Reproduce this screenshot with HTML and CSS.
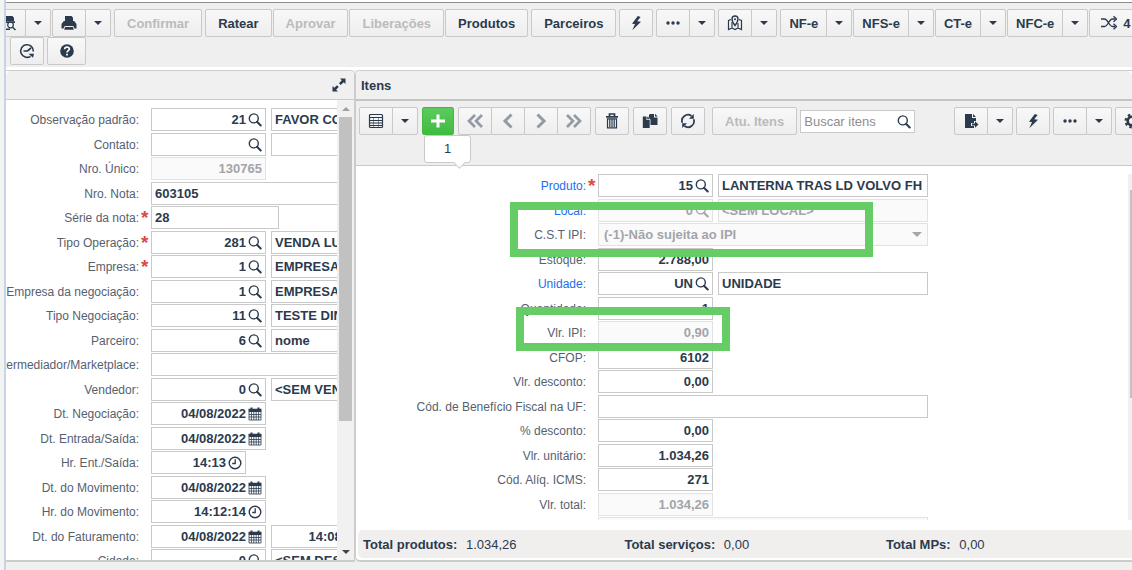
FILE: index.html
```html
<!DOCTYPE html>
<html lang="pt-BR">
<head>
    <meta charset="UTF-8">
    <meta name="viewport" content="width=device-width, initial-scale=1.0">
    <title>Central de Vendas</title>
    <link rel="stylesheet" href="styles.css">
</head>
<body>

    <!-- Icons -->
    <svg class="sprite" aria-hidden="true">
        <symbol id="search" viewBox="0 0 14 14"><circle cx="5.8" cy="5.4" r="4.5" fill="none" stroke="currentColor" stroke-width="1.4"/><path d="M9 8.8l3.7 3.7" stroke="currentColor" stroke-width="2" stroke-linecap="round"/></symbol>
        <symbol id="calendar" viewBox="0 0 14 14"><path d="M.5 1.8h2V.5h2v1.300h5V.5h2v1.300h2V5H.5z" fill="currentColor"/><path d="M1 5v8h12V5M1 7.500h12M1 10h12M3.400 5v8M5.800 5v8M8.200 5v8M10.600 5v8" fill="none" stroke="currentColor" stroke-width=".8"/></symbol>
        <symbol id="clock" viewBox="0 0 14 14"><circle cx="7" cy="7" r="5.8" fill="none" stroke="currentColor" stroke-width="1.4"/><path d="M7.2 3.2v4.3H4.2" fill="none" stroke="currentColor" stroke-width="1.3"/></symbol>
        <symbol id="caret" viewBox="0 0 8 4"><path d="M0 0h8L4 4z" fill="currentColor"/></symbol>
        <symbol id="bolt" viewBox="0 0 16 16"><path d="M9.8 1L4 8.7l3 .3-2.7 6.2L13 6.7 9.2 6.2 12.6 2z" fill="currentColor"/></symbol>
        <symbol id="dots" viewBox="0 0 16 16"><circle cx="3" cy="8" r="1.7" fill="currentColor"/><circle cx="8" cy="8" r="1.7" fill="currentColor"/><circle cx="13" cy="8" r="1.7" fill="currentColor"/></symbol>
        <symbol id="print" viewBox="0 0 16 16"><path d="M4 1h6.500L12 2.500V7H4z" fill="currentColor"/><path d="M2.800 6h10.400L15.500 9v4.500h-2L12.300 11H3.700L2.500 13.500h-2V9z" fill="currentColor"/><path d="M4 12h8l.8 2.800H3.200z" fill="currentColor"/></symbol>
        <symbol id="preview" viewBox="0 0 16 16"><path d="M3 1h8.500L13 3v3H3z" fill="currentColor"/><path d="M1 6.200h13V8H1zM1 8h3v5H1z" fill="currentColor"/><circle cx="9.500" cy="10" r="2.800" fill="#f4f4f4" stroke="currentColor" stroke-width="1.200"/><path d="M11.500 12.200l3 2.800M3 14.300h6" stroke="currentColor" stroke-width="1.500"/></symbol>
        <symbol id="map" viewBox="0 0 16 16"><path d="M4 4.500L1.500 5.500v9L5 13l3 1.500L11 13l3.500 1.500v-9L12 4.500M5 7v6M11 8v5" fill="none" stroke="currentColor" stroke-width="1.200"/><path d="M8 1a3 3 0 0 0-3 3c0 2.500 3 6.500 3 6.500S11 6.500 11 4a3 3 0 0 0-3-3z" fill="none" stroke="currentColor" stroke-width="1.400"/><circle cx="8" cy="4.200" r="1" fill="currentColor"/></symbol>
        <symbol id="shuffle" viewBox="0 0 16 16"><path d="M0 4h3.500c3.500 0 4.500 7.500 8 7.500H14M0 11.500h3.500c3.500 0 4.500-7.500 8-7.500H14" fill="none" stroke="currentColor" stroke-width="1.300"/><path d="M12.500 1.200L15.500 4l-3 2.800M12.500 8.700l3 2.800-3 2.800" fill="none" stroke="currentColor" stroke-width="1.300"/></symbol>
        <symbol id="history" viewBox="0 0 16 16"><path d="M11.500 13.300A6.300 6.300 0 1 1 14.300 8.500" fill="none" stroke="currentColor" stroke-width="1.600"/><path d="M4.500 8h4l3.500-3" fill="none" stroke="currentColor" stroke-width="1.700"/><path d="M9.500 10.800h5.500l-1 4z" fill="currentColor"/></symbol>
        <symbol id="help" viewBox="0 0 16 16"><circle cx="8" cy="8" r="6.800" fill="currentColor"/><path d="M5.700 6.300c0-3 4.600-3 4.600-.3C10.300 7.600 8 7.600 8 9.500" fill="none" stroke="#fff" stroke-width="1.700"/><path d="M7.100 10.700h1.800v1.800H7.100z" fill="#fff"/></symbol>
        <symbol id="expand" viewBox="0 0 14 14"><path d="M8 .5h5.500V6l-1.800-1.800-3 2.800L7 5.300l2.800-3zM.5 8l1.800 1.800L5 7.200 6.700 9l-2.600 2.700L6 13.500H.5z" fill="currentColor"/></symbol>
        <symbol id="table" viewBox="0 0 16 16"><rect x="1.500" y="1.500" width="13" height="13" rx="1" fill="none" stroke="currentColor" stroke-width="1.200"/><path d="M2 4.500h12M2 7.500h12M2 10h12M2 12.500h12" stroke="currentColor" stroke-width="1.200"/><path d="M5.500 4v10M10.500 4v10" stroke="currentColor" stroke-width=".5"/></symbol>
        <symbol id="plus" viewBox="0 0 16 16"><path d="M8 1.500v13M1 8h14" stroke="currentColor" stroke-width="3"/></symbol>
        <symbol id="prev" viewBox="0 0 16 16"><path d="M11.500 1.500L5 8l6.500 6.500" fill="none" stroke="currentColor" stroke-width="3"/></symbol>
        <symbol id="next" viewBox="0 0 16 16"><path d="M4.500 1.500L11 8l-6.500 6.500" fill="none" stroke="currentColor" stroke-width="3"/></symbol>
        <symbol id="first" viewBox="0 0 16 16"><path d="M8 2L2 8l6 6M15 2L9 8l6 6" fill="none" stroke="currentColor" stroke-width="2.700"/></symbol>
        <symbol id="last" viewBox="0 0 16 16"><path d="M1 2l6 6-6 6M8 2l6 6-6 6" fill="none" stroke="currentColor" stroke-width="2.700"/></symbol>
        <symbol id="trash" viewBox="0 0 16 16"><path d="M5.500 3V1h5v2M2 3.800h12" fill="none" stroke="currentColor" stroke-width="1.700"/><path d="M3.500 5.500v9.300h9V5.500M5.800 5.500V14M8 5.500V14M10.200 5.500V14M3 5.800h10" fill="none" stroke="currentColor" stroke-width="1.200"/></symbol>
        <symbol id="copy" viewBox="0 0 16 16"><path d="M7.500 1H12v3.500h3.500V12H8.500V6.500L6.500 4.500zM13 .8l2.700 2.700H13z" fill="currentColor"/><path d="M.8 3.500h3.700V7h3.200v8H.8zM5.200 3.500l2.600 2.700H5.200z" fill="currentColor"/></symbol>
        <symbol id="refresh" viewBox="0 0 16 16"><path d="M2.300 9.800A6 6 0 0 1 11.500 3M13.700 6.200A6 6 0 0 1 4.500 13" fill="none" stroke="currentColor" stroke-width="1.700"/><path d="M13.800 1v4.800H9zM2.200 15v-4.800H7z" fill="currentColor"/></symbol>
        <symbol id="export" viewBox="0 0 16 16"><path d="M2 1h7v4h4v3h-2v2H8v3h3v2H2zM10 1l3 3h-3z" fill="currentColor"/><path d="M9 10.500h3V8.300l3.500 3.200-3.500 3.200v-2.200H9z" fill="currentColor"/></symbol>
        <symbol id="gear" viewBox="0 0 16 16"><circle cx="8" cy="8" r="4.300" fill="none" stroke="currentColor" stroke-width="2.600"/><circle cx="8" cy="8" r="6.300" fill="none" stroke="currentColor" stroke-width="2.400" stroke-dasharray="2.470 2.470"/></symbol>
    </svg>

    <div class="app">

        <header class="toolbar">
            <div class="toolbar-row first-row">
                <div class="tight">
                    <div class="group">
                        <button class="btn icon" aria-label="Visualizar"><svg><use href="#preview"/></svg></button>
                        <button class="btn drop" aria-label="Opções de visualização"><svg><use href="#caret"/></svg></button>
                    </div>
                    <div class="group">
                        <button class="btn icon" aria-label="Imprimir"><svg><use href="#print"/></svg></button>
                        <button class="btn drop" aria-label="Opções de impressão"><svg><use href="#caret"/></svg></button>
                    </div>
                </div>
                <button class="btn" disabled>Confirmar</button>
                <div class="tight">
                    <button class="btn">Ratear</button>
                    <button class="btn" disabled>Aprovar</button>
                    <button class="btn" disabled>Liberações</button>
                    <button class="btn">Produtos</button>
                </div>
                <button class="btn">Parceiros</button>
                <button class="btn icon" aria-label="Ações"><svg><use href="#bolt"/></svg></button>
                <div class="group">
                    <button class="btn icon" aria-label="Mais"><svg><use href="#dots"/></svg></button>
                    <button class="btn drop" aria-label="Mais opções"><svg><use href="#caret"/></svg></button>
                </div>
                <div class="group">
                    <button class="btn icon" aria-label="Mapa"><svg><use href="#map"/></svg></button>
                    <button class="btn drop" aria-label="Opções do mapa"><svg><use href="#caret"/></svg></button>
                </div>
                <div class="tight">
                    <div class="group">
                        <button class="btn nf">NF-e</button>
                        <button class="btn drop" aria-label="Opções NF-e"><svg><use href="#caret"/></svg></button>
                    </div>
                    <div class="group">
                        <button class="btn nf">NFS-e</button>
                        <button class="btn drop" aria-label="Opções NFS-e"><svg><use href="#caret"/></svg></button>
                    </div>
                    <div class="group">
                        <button class="btn nf">CT-e</button>
                        <button class="btn drop" aria-label="Opções CT-e"><svg><use href="#caret"/></svg></button>
                    </div>
                    <div class="group">
                        <button class="btn nf">NFC-e</button>
                        <button class="btn drop" aria-label="Opções NFC-e"><svg><use href="#caret"/></svg></button>
                    </div>
                    <button class="btn count"><svg><use href="#shuffle"/></svg>4</button>
                </div>
            </div>
            <div class="toolbar-row second-row">
                <button class="btn icon" aria-label="Histórico"><svg><use href="#history"/></svg></button>
                <button class="btn help" aria-label="Ajuda"><svg><use href="#help"/></svg></button>
            </div>
        </header>

        <main class="panels">

            <!-- Note header -->
            <section class="panel note">
                <div class="panel-title">
                    <button class="expand" aria-label="Expandir"><svg><use href="#expand"/></svg></button>
                </div>
                <div class="note-body">
                    <form class="form note-form">
                        <div class="row">
                            <label for="obs">Observação padrão:</label>
                            <div class="field num"><input id="obs" value="21"><svg><use href="#search"/></svg></div>
                            <div class="field desc"><input aria-label="Descrição da observação" value="FAVOR CO"></div>
                        </div>
                        <div class="row">
                            <label for="contato">Contato:</label>
                            <div class="field num"><input id="contato"><svg><use href="#search"/></svg></div>
                            <div class="field desc"><input aria-label="Nome do contato"></div>
                        </div>
                        <div class="row">
                            <label for="unico">Nro. Único:</label>
                            <div class="field num off"><input id="unico" value="130765" disabled></div>
                        </div>
                        <div class="row">
                            <label for="nota">Nro. Nota:</label>
                            <div class="field wide"><input id="nota" value="603105"></div>
                        </div>
                        <div class="row">
                            <label for="serie" class="required">Série da nota:</label>
                            <div class="field serie"><input id="serie" value="28"></div>
                        </div>
                        <div class="row">
                            <label for="operacao" class="required">Tipo Operação:</label>
                            <div class="field num"><input id="operacao" value="281"><svg><use href="#search"/></svg></div>
                            <div class="field desc"><input aria-label="Descrição da operação" value="VENDA LU"></div>
                        </div>
                        <div class="row">
                            <label for="empresa" class="required">Empresa:</label>
                            <div class="field num"><input id="empresa" value="1"><svg><use href="#search"/></svg></div>
                            <div class="field desc"><input aria-label="Nome da empresa" value="EMPRESA"></div>
                        </div>
                        <div class="row">
                            <label for="empneg">Empresa da negociação:</label>
                            <div class="field num"><input id="empneg" value="1"><svg><use href="#search"/></svg></div>
                            <div class="field desc"><input aria-label="Nome da empresa da negociação" value="EMPRESA"></div>
                        </div>
                        <div class="row">
                            <label for="tiponeg">Tipo Negociação:</label>
                            <div class="field num"><input id="tiponeg" value="11"><svg><use href="#search"/></svg></div>
                            <div class="field desc"><input aria-label="Descrição da negociação" value="TESTE DIN"></div>
                        </div>
                        <div class="row">
                            <label for="parceiro">Parceiro:</label>
                            <div class="field num"><input id="parceiro" value="6"><svg><use href="#search"/></svg></div>
                            <div class="field desc"><input aria-label="Nome do parceiro" value="nome"></div>
                        </div>
                        <div class="row">
                            <label for="market">Intermediador/Marketplace:</label>
                            <div class="field wide"><input id="market"></div>
                        </div>
                        <div class="row">
                            <label for="vendedor">Vendedor:</label>
                            <div class="field num"><input id="vendedor" value="0"><svg><use href="#search"/></svg></div>
                            <div class="field desc"><input aria-label="Nome do vendedor" value="&lt;SEM VEN"></div>
                        </div>
                        <div class="row">
                            <label for="dtneg">Dt. Negociação:</label>
                            <div class="field num"><input id="dtneg" value="04/08/2022"><svg><use href="#calendar"/></svg></div>
                        </div>
                        <div class="row">
                            <label for="dtent">Dt. Entrada/Saída:</label>
                            <div class="field num"><input id="dtent" value="04/08/2022"><svg><use href="#calendar"/></svg></div>
                        </div>
                        <div class="row">
                            <label for="hrent">Hr. Ent./Saída:</label>
                            <div class="field num time"><input id="hrent" value="14:13"><svg><use href="#clock"/></svg></div>
                        </div>
                        <div class="row">
                            <label for="dtmov">Dt. do Movimento:</label>
                            <div class="field num"><input id="dtmov" value="04/08/2022"><svg><use href="#calendar"/></svg></div>
                        </div>
                        <div class="row">
                            <label for="hrmov">Hr. do Movimento:</label>
                            <div class="field num"><input id="hrmov" value="14:12:14"><svg><use href="#clock"/></svg></div>
                        </div>
                        <div class="row">
                            <label for="dtfat">Dt. do Faturamento:</label>
                            <div class="field num"><input id="dtfat" value="04/08/2022"><svg><use href="#calendar"/></svg></div>
                            <div class="field num time"><input aria-label="Hora do faturamento" value="14:08:"><svg><use href="#clock"/></svg></div>
                        </div>
                        <div class="row">
                            <label for="cidade">Cidade:</label>
                            <div class="field num"><input id="cidade" value="0"><svg><use href="#search"/></svg></div>
                            <div class="field desc"><input aria-label="Nome da cidade" value="&lt;SEM DES"></div>
                        </div>
                    </form>
                    <div class="scrollbar">
                        <svg class="up"><use href="#caret"/></svg>
                        <div class="thumb"></div>
                        <svg class="down"><use href="#caret"/></svg>
                    </div>
                </div>
            </section>

            <!-- Items -->
            <section class="panel items">
                <h2 class="panel-title">Itens</h2>
                <div class="items-toolbar">
                    <div class="group">
                        <button class="btn icon" aria-label="Modo grade"><svg><use href="#table"/></svg></button>
                        <button class="btn drop" aria-label="Opções da grade"><svg><use href="#caret"/></svg></button>
                    </div>
                    <div class="add">
                        <button class="btn green" aria-label="Adicionar"><svg><use href="#plus"/></svg></button>
                        <div class="bubble">1</div>
                    </div>
                    <div class="group nav">
                        <button class="btn icon" aria-label="Primeiro"><svg><use href="#first"/></svg></button>
                        <button class="btn icon" aria-label="Anterior"><svg><use href="#prev"/></svg></button>
                        <button class="btn icon" aria-label="Próximo"><svg><use href="#next"/></svg></button>
                        <button class="btn icon" aria-label="Último"><svg><use href="#last"/></svg></button>
                    </div>
                    <button class="btn icon" aria-label="Excluir"><svg><use href="#trash"/></svg></button>
                    <button class="btn icon" aria-label="Duplicar"><svg><use href="#copy"/></svg></button>
                    <button class="btn icon" aria-label="Atualizar"><svg><use href="#refresh"/></svg></button>
                    <div class="find">
                        <button class="btn" disabled>Atu. Itens</button>
                        <div class="field search"><input type="text" placeholder="Buscar itens" aria-label="Buscar itens"><svg><use href="#search"/></svg></div>
                    </div>
                    <div class="actions">
                        <div class="group">
                            <button class="btn icon" aria-label="Exportar"><svg><use href="#export"/></svg></button>
                            <button class="btn drop" aria-label="Opções de exportação"><svg><use href="#caret"/></svg></button>
                        </div>
                        <button class="btn icon" aria-label="Ações do item"><svg><use href="#bolt"/></svg></button>
                        <div class="group">
                            <button class="btn icon" aria-label="Mais"><svg><use href="#dots"/></svg></button>
                            <button class="btn drop" aria-label="Mais opções do item"><svg><use href="#caret"/></svg></button>
                        </div>
                        <button class="btn icon" aria-label="Configurações"><svg><use href="#gear"/></svg></button>
                    </div>
                </div>

                <div class="items-body">
                    <form class="form items-form">
                        <div class="row">
                            <label for="produto" class="link required">Produto:</label>
                            <div class="field num"><input id="produto" value="15"><svg><use href="#search"/></svg></div>
                            <div class="field desc"><input aria-label="Descrição do produto" value="LANTERNA TRAS LD VOLVO FH"></div>
                        </div>
                        <div class="row">
                            <label for="local" class="link">Local:</label>
                            <div class="field num off"><input id="local" value="0" disabled><svg><use href="#search"/></svg></div>
                            <div class="field desc off"><input aria-label="Descrição do local" value="&lt;SEM LOCAL&gt;" disabled></div>
                        </div>
                        <div class="row">
                            <label for="cst">C.S.T IPI:</label>
                            <div class="field wide off">
                                <select id="cst" disabled><option>(-1)-Não sujeita ao IPI</option></select>
                                <svg class="arrow"><use href="#caret"/></svg>
                            </div>
                        </div>
                        <div class="row">
                            <label for="estoque">Estoque:</label>
                            <div class="field num"><input id="estoque" value="2.788,00"></div>
                        </div>
                        <div class="row">
                            <label for="unidade" class="link">Unidade:</label>
                            <div class="field num"><input id="unidade" value="UN"><svg><use href="#search"/></svg></div>
                            <div class="field desc"><input aria-label="Descrição da unidade" value="UNIDADE"></div>
                        </div>
                        <div class="row">
                            <label for="qtd">Quantidade:</label>
                            <div class="field num"><input id="qtd" value="1"></div>
                        </div>
                        <div class="row">
                            <label for="ipi">Vlr. IPI:</label>
                            <div class="field num off"><input id="ipi" value="0,90" disabled></div>
                        </div>
                        <div class="row">
                            <label for="cfop">CFOP:</label>
                            <div class="field num"><input id="cfop" value="6102"></div>
                        </div>
                        <div class="row">
                            <label for="vlrdesc">Vlr. desconto:</label>
                            <div class="field num"><input id="vlrdesc" value="0,00"></div>
                        </div>
                        <div class="row">
                            <label for="beneficio">Cód. de Benefício Fiscal na UF:</label>
                            <div class="field wide"><input id="beneficio"></div>
                        </div>
                        <div class="row">
                            <label for="percdesc">% desconto:</label>
                            <div class="field num"><input id="percdesc" value="0,00"></div>
                        </div>
                        <div class="row">
                            <label for="unitario">Vlr. unitário:</label>
                            <div class="field num"><input id="unitario" value="1.034,26"></div>
                        </div>
                        <div class="row">
                            <label for="icms">Cód. Alíq. ICMS:</label>
                            <div class="field num"><input id="icms" value="271"></div>
                        </div>
                        <div class="row">
                            <label for="total">Vlr. total:</label>
                            <div class="field num off"><input id="total" value="1.034,26" disabled></div>
                        </div>
                        <div class="row">
                            <span></span>
                            <div class="field wide off"><input aria-label="Próximo campo" disabled></div>
                        </div>
                        <div class="highlight cst-mark"></div>
                        <div class="highlight ipi-mark"></div>
                    </form>
                    <div class="items-scroll"><div class="items-thumb"></div></div>
                </div>

                <div class="totals">
                    <div><strong>Total produtos:</strong> 1.034,26</div>
                    <div><strong>Total serviços:</strong> 0,00</div>
                    <div><strong>Total MPs:</strong> 0,00</div>
                </div>
            </section>
        </main>

    </div>

</body>
</html>
```

FILE: styles.css
```css
* {
    box-sizing: border-box;
}

body {
    margin: 0;
    height: 100vh;
    overflow: hidden;
    font-family: "Liberation Sans", Arial, sans-serif;
    font-size: 13px;
    color: #2b3a4d;
    background-color: #f0f0f0;
}

.sprite {
    display: none;
}

svg {
    display: block;
    flex: none;
}

.app {
    display: flex;
    flex-direction: column;
    height: 100vh;
    padding-bottom: 8px;
    border-left: 2px solid #c6d4e6;
    margin-left: 4px;
    box-shadow: -4px 0 0 #f3f3f4;
}

/* Main toolbar */
.toolbar {
    flex: none;
    padding: 6px 0 2px;
    border-bottom: 3px solid #fff;
    border-top: 1px solid #8e8e8e;
    background-color: #efefef;
    box-shadow: 0 -2px 0 #fff;
    margin-top: 2px;
    overflow: hidden;
}

.toolbar-row {
    display: flex;
    gap: 3px;
}

.first-row {
    margin-left: -14px;
}

.second-row {
    margin-left: 4px;
}

.tight {
    display: flex;
    flex: none;
    gap: 1px;
}

.group {
    display: flex;
    flex: none;
}

.group .btn + .btn {
    margin-left: -1px;
    border-top-left-radius: 0;
    border-bottom-left-radius: 0;
}

.btn {
    display: flex;
    flex: none;
    align-items: center;
    justify-content: center;
    height: 28px;
    padding: 0 12px;
    border: 1px solid #c9c9c9;
    border-radius: 2px;
    background: linear-gradient(#f8f8f8, #eeeeee);
    color: #2b3a4d;
    font-family: inherit;
    font-size: 13px;
    font-weight: bold;
    white-space: nowrap;
}

.btn:disabled {
    color: #bbb;
}

.btn svg {
    width: 16px;
    height: 16px;
}

.btn.icon {
    width: 34px;
    padding: 0;
}

.btn.drop {
    width: 26px;
    padding: 0;
}

.btn.drop svg {
    width: 8px;
    height: 4px;
}

.btn.nf {
    padding: 0 8px;
}

.btn.help {
    width: 39px;
    padding: 0;
}

.btn.count {
    gap: 6px;
    padding: 0 11px;
}

/* Panels */
.panels {
    display: flex;
    flex: 1;
    min-height: 0;
}

.panel {
    display: flex;
    flex-direction: column;
    min-width: 0;
    border: 1px solid #ccc;
    border-bottom-width: 2px;
    background-color: #fff;
}

.note {
    flex: 0 0 349px;
    border-left: none;
    border-radius: 0 5px 0 0;
    overflow: hidden;
}

.items {
    flex: 1;
    border-right: none;
    border-radius: 5px 0 0 5px;
}

.panel-title {
    display: flex;
    flex: none;
    align-items: center;
    height: 29px;
    margin: 0;
    padding: 0 5px;
    border-bottom: 1px solid #c9c9c9;
    border-radius: 5px 5px 0 0;
    background-color: #f0f0f0;
    font-size: 13px;
}

.items .panel-title {
    height: 30px;
    border-bottom: 2px solid #c4c4c4;
}

.expand {
    margin-left: auto;
    padding: 0 3px;
    border: none;
    background: none;
    color: #2b3a4d;
}

.expand svg {
    width: 14px;
    height: 14px;
}

.note-body {
    display: flex;
    flex: 1;
    min-height: 0;
}

/* Scrollbar of the note form */
.scrollbar {
    display: flex;
    flex: 0 0 17px;
    flex-direction: column;
    align-items: center;
    justify-content: space-between;
    padding: 7px 0 6px;
    background-color: #f1f1f1;
}

.scrollbar svg {
    width: 8px;
    height: 4px;
}

.scrollbar .up {
    color: #a0a0a0;
    transform: rotate(180deg);
}

.scrollbar .down {
    color: #444;
}

.thumb {
    width: 13px;
    height: 68%;
    margin: 6px 0 auto;
    background-color: #c1c1c1;
}

/* Forms */
.form {
    flex: 1;
    min-width: 0;
    padding-top: 8px;
    overflow: hidden;
}

.row {
    display: flex;
    gap: 5px;
    height: 23px;
    margin-bottom: 1px;
}

.row:nth-child(odd) {
    margin-bottom: 2px;
}

.row > :first-child {
    position: relative;
    display: flex;
    flex: none;
    align-items: center;
    justify-content: flex-end;
    margin-right: 7px;
    color: #56616f;
    font-size: 12px;
    white-space: nowrap;
}

.note-form .row > :first-child {
    width: 133px;
}

.items-form .row > :first-child {
    width: 230px;
}

.row > .link:first-child {
    color: #1a6eee;
}

.required::after {
    content: "*";
    position: absolute;
    left: 100%;
    top: 1px;
    padding-left: 2px;
    color: #dd4b45;
    font-size: 19px;
    font-weight: bold;
}

.field {
    display: flex;
    flex: none;
    align-items: center;
    gap: 2px;
    height: 23px;
    padding: 0 3px;
    border: 1px solid #c9c9c9;
    background-color: #fff;
}

.field input,
.field select {
    flex: 1;
    width: 100%;
    min-width: 0;
    height: 20px;
    padding: 0;
    border: none;
    outline: none;
    background: none;
    color: #2b3a4d;
    font-family: inherit;
    font-size: 13px;
    font-weight: bold;
}

.field svg {
    width: 14px;
    height: 14px;
}

.num {
    width: 115px;
}

.num input {
    text-align: right;
}

.desc {
    width: 210px;
}

.wide {
    width: 330px;
}

.serie {
    width: 128px;
}

.time {
    width: 95px;
}

.off {
    border-color: #e2e2e2;
    background-color: #fafafa;
    color: #a2a5aa;
}

.field.off input,
.field.off select {
    color: #a2a5aa;
    opacity: 1;
}

.field select {
    appearance: none;
    padding-left: 2px;
}

.field .arrow {
    width: 10px;
    height: 5px;
    margin-right: 2px;
}

/* Items toolbar */
.items-toolbar {
    display: flex;
    flex: none;
    gap: 4px;
    height: 65px;
    padding: 6px 0 0 3px;
    border-bottom: 1px solid #c9c9c9;
    background-color: #efefef;
}

.nav .btn {
    color: #929aa5;
}

.find,
.actions {
    display: flex;
    flex: none;
    gap: 3px;
}

.find {
    margin-left: 3px;
}

.actions {
    margin-left: 35px;
}

.search {
    width: 115px;
    margin-top: 3px;
}

.search input {
    font-weight: normal;
}

.search input::placeholder {
    color: #8e8e8e;
}

.add {
    position: relative;
}

.btn.green {
    width: 32px;
    padding: 0;
    border-color: #43b944;
    background: linear-gradient(#5ccb5d, #3fbc40);
    color: #fff;
}

.bubble {
    position: absolute;
    z-index: 2;
    top: 28px;
    left: 2px;
    width: 47px;
    height: 28px;
    border: 1px solid #c9c9c9;
    border-radius: 3px;
    background-color: #fff;
    line-height: 26px;
    text-align: center;
}

.bubble::after {
    content: "";
    position: absolute;
    left: 30px;
    bottom: -5px;
    width: 8px;
    height: 8px;
    border: solid #c9c9c9;
    border-width: 0 1px 1px 0;
    background-color: #fff;
    transform: rotate(45deg);
}

.items-body {
    display: flex;
    flex: 1;
    min-height: 0;
}

.items-form {
    position: relative;
}

.items-scroll {
    flex: 0 0 4px;
    margin-top: 8px;
    padding-top: 16px;
    background-color: #f0f0f0;
}

.items-thumb {
    width: 2px;
    height: 63%;
    margin-left: auto;
    background-color: #c1c1c1;
}

/* Marks drawn over the form */
.highlight {
    position: absolute;
    border: 8px solid #66cc66;
    pointer-events: none;
}

.cst-mark {
    top: 36px;
    left: 154px;
    width: 363px;
    height: 55px;
}

.ipi-mark {
    top: 141px;
    left: 160px;
    width: 214px;
    height: 44px;
}

/* Totals */
.totals {
    display: grid;
    flex: none;
    grid-template-columns: 34% 34% 1fr;
    align-items: center;
    height: 28px;
    margin: 10px 0 2px 2px;
    padding-left: 5px;
    border-radius: 5px 0 0 5px;
    background-color: #f0efee;
}

.totals strong {
    margin-right: 5px;
}
```
